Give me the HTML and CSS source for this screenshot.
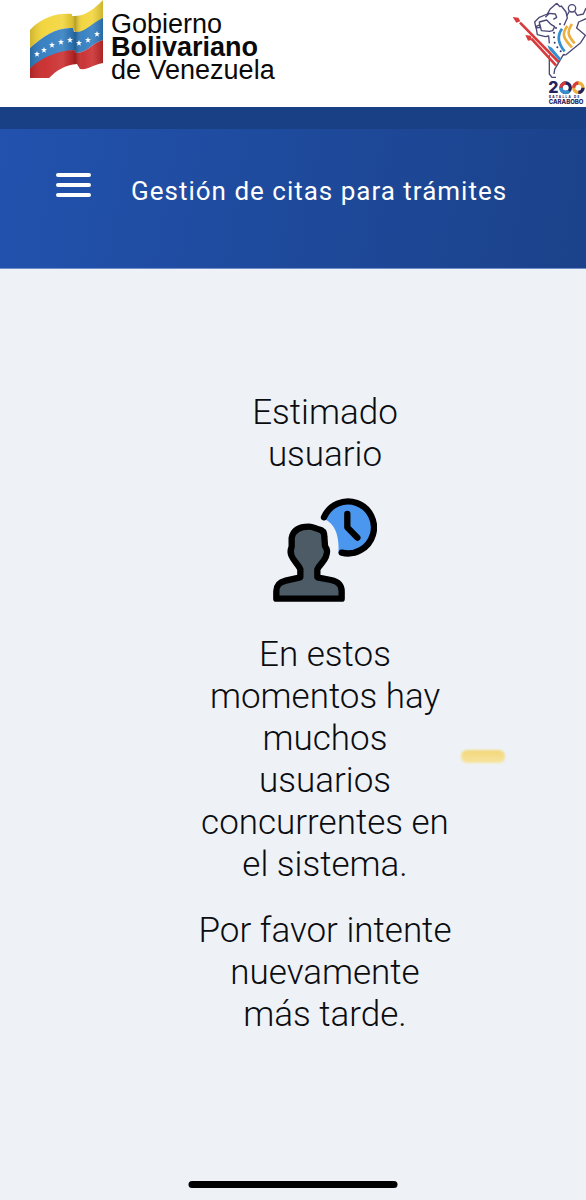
FILE: index.html
```html
<!DOCTYPE html>
<html lang="es">
<head>
  <meta charset="UTF-8">
  <meta name="viewport" content="width=device-width, initial-scale=1.0">
  <title>Gestión de citas para trámites</title>
  <link rel="stylesheet" href="styles.css">
</head>
<body>
  <header class="banner">
    <div class="gobierno">
      <svg class="flag" viewBox="0 0 74 79" aria-hidden="true">
        <defs>
          <linearGradient id="fold" x1="0" y1="0" x2="1" y2="0">
            <stop offset="0" stop-color="#000" stop-opacity="0.15"/>
            <stop offset="0.2" stop-color="#fff" stop-opacity="0.05"/>
            <stop offset="0.45" stop-color="#fff" stop-opacity="0.12"/>
            <stop offset="0.58" stop-color="#000" stop-opacity="0.1"/>
            <stop offset="0.62" stop-color="#000" stop-opacity="0.25"/>
            <stop offset="0.72" stop-color="#fff" stop-opacity="0.05"/>
            <stop offset="0.85" stop-color="#fff" stop-opacity="0.12"/>
            <stop offset="1" stop-color="#000" stop-opacity="0.15"/>
          </linearGradient>
          <path id="star" d="M0-3 .8-.9 3-.8 1.2.5 1.9 2.7 0 1.4-1.9 2.7-1.2.5-3-.8-.8-.9z"/>
        </defs>
        <path fill="#f2d437" d="M0 30C12 17 27 13 42 14v2c12 1 21-6 31-16v20C60 27 56 33 45 32l-2-4C27 27 13 36 0 48z"/>
        <path fill="#2f7cc0" d="M0 48C13 36 27 27 43 28l1 4C56 33 61 23 73 18v22C62 43 57 53 46 53l-2-3C28 52 14 58 0 68z"/>
        <path fill="#c92a2b" d="M0 68C14 56 28 51 44 50l2 3c11 0 16-10 27-13v23c-11 2-15 7-23 6l-3-5c-12 1-20 6-28 14H0z"/>
        <path fill="url(#fold)" d="M0 30C12 17 27 13 42 14v2c12 1 21-6 31-16v63c-11 2-15 7-23 6l-3-5c-12 1-20 6-28 14H0z"/>
        <g fill="#fff">
          <use href="#star" x="7" y="54"/>
          <use href="#star" x="14" y="50"/>
          <use href="#star" x="22" y="45"/>
          <use href="#star" x="31" y="42"/>
          <use href="#star" x="40" y="40"/>
          <use href="#star" x="49" y="43"/>
          <use href="#star" x="58" y="40"/>
          <use href="#star" x="67" y="34"/>
        </g>
      </svg>
      <p class="gobierno-name">Gobierno<br><strong>Bolivariano</strong><br>de Venezuela</p>
    </div>
    <svg class="carabobo" viewBox="0 0 258 318" role="img" aria-label="200 Batalla de Carabobo">
      <g fill="none" stroke="#4a4874" stroke-width="4" stroke-linejoin="round">
        <path d="M170 10 150 28l-8 14-24 10-14 14 4 18 12-2-2-16 22-6 14 14 10 6-6 12-10 2-24-2-4-18-12 6 4 24 24 6 10-2 2 22M136 52l12-12 18 2 4 10-10 6M170 10l10 10 4-2 14 18 4 18-10 22"/>
        <circle cx="216" cy="25" r="11"/>
        <path d="M208 34l-8 14M224 34l8 12 18-4 8-18M258 56l-22 10-6 18 26 22-14 22-24 20-22 18M148 166v56l8 10h12M190 164l-26 44-2 14"/>
      </g>
      <g stroke="#d83b3c" stroke-width="8">
        <path d="M60 68 176 186M94 116l74 80"/>
      </g>
      <path fill="#d83b3c" d="m38 51 17 2 6 11-12 4zM76 105l16 2 4 13-12 2z"/>
      <g fill="none" stroke-width="8">
        <path stroke="#338fd0" d="M186 86c-16 22-12 44 8 68"/>
        <path stroke="#edb03d" d="M202 78c-18 24-12 38 14 64M216 72c-18 26-10 38 8 58"/>
      </g>
      <path fill="#338fd0" d="m142 136 14 7 28 34-6 5-30-33z"/>
      <g fill="#3a3866">
        <circle cx="180" cy="72" r="3"/>
        <circle cx="168" cy="84" r="3"/>
        <circle cx="162" cy="98" r="3"/>
        <circle cx="162" cy="112" r="3"/>
        <circle cx="164" cy="128" r="3"/>
        <circle cx="172" cy="142" r="3"/>
        <circle cx="182" cy="154" r="3"/>
        <circle cx="192" cy="164" r="3"/>
      </g>
      <text class="carabobo-year" x="145" y="280">2</text>
      <g fill="none" stroke-width="10">
        <circle cx="197" cy="263" r="14" stroke="#28235c"/>
        <path stroke="#d83b3c" d="M183 263a14 14 0 0 1 14-14"/>
        <path stroke="#338fd0" d="M183 263a14 14 0 0 0 24 10"/>
        <circle cx="235" cy="263" r="14" stroke="#edb03d"/>
        <path stroke="#d83b3c" d="M221 263a14 14 0 0 1 14-14"/>
        <path stroke="#28235c" d="M235 277a14 14 0 0 0 14-14"/>
      </g>
      <text class="carabobo-small" x="147" y="295">BATALLA DE</text>
      <text class="carabobo-name" x="146" y="312">CARABOBO</text>
    </svg>
  </header>

  <nav class="toolbar">
    <button class="menu-button" type="button" aria-label="Menú">
      <span></span>
      <span></span>
      <span></span>
    </button>
    <h1>Gestión de citas para trámites</h1>
  </nav>

  <main class="message">
    <h2>Estimado usuario</h2>
    <svg class="wait-icon" viewBox="0 0 312 312" aria-hidden="true">
      <path fill="#4b96ee" d="M153 62C166 20 222-4 266 22s50 90 20 122c-22 24-50 26-90 20 4-44-8-88-43-102z"/>
      <g fill="none" stroke="#000" stroke-width="19" stroke-linecap="round" stroke-linejoin="round">
        <path d="M153 58A78 78 0 1 1 206 164M223 48v40l30 31"/>
        <path fill="#4c5b66" d="M10 302v-22c0-18 8-27 28-32l44-10v-24C74 196 62 190 56 174c-5-10-4-18 0-28v-26c4-22 22-34 52-34 12 0 20 6 30 8 12 2 16 10 16 22l2 28c8 12 8 18 2 34-4 12-18 22-25 36v24l41 8c24 5 32 16 32 34v22z"/>
      </g>
    </svg>
    <p>En estos momentos hay muchos usuarios concurrentes en el sistema.</p>
    <p>Por favor intente nuevamente más tarde.</p>
    <span class="marker"></span>
  </main>

  <div class="home-indicator"></div>
</body>
</html>
```
FILE: styles.css
```css
* {
  box-sizing: border-box;
}

body {
  margin: 0;
  min-height: 100vh;
  background-color: #eef2f7;
  color: #0b0c10;
  font-family: Roboto, sans-serif;
}

.banner {
  display: flex;
  justify-content: space-between;
  align-items: flex-start;
  height: 107px;
  padding-left: 30px;
  background: white;
}

.gobierno {
  display: flex;
  gap: 7px;
}

.flag {
  width: 74px;
  height: 79px;
}

.gobierno-name {
  margin: 13px 0 0;
  color: #0a0a0a;
  font-family: "Liberation Sans", Arial, sans-serif;
  font-size: 27px;
  line-height: 23px;
}

.carabobo {
  width: 86px;
  height: 106px;
}

.carabobo text {
  fill: #28235c;
  font-family: Inter, sans-serif;
  font-weight: 800;
}

.carabobo .carabobo-year {
  font-size: 48px;
}

.carabobo .carabobo-small {
  font-size: 9px;
  letter-spacing: 4px;
}

.carabobo .carabobo-name {
  font-size: 18px;
}

.toolbar {
  display: flex;
  align-items: center;
  gap: 40px;
  height: 162px;
  padding: 0 56px;
  border-top: 22px solid #194085;
  border-bottom: 1px solid #6f8dca;
  background: linear-gradient(100deg, #2252ae, #1b428a);
  color: white;
}

.menu-button {
  display: flex;
  flex-direction: column;
  gap: 6px;
  width: 35px;
  margin: 0 0 28px;
  padding: 0;
  border: none;
  background: none;
  cursor: pointer;
}

.menu-button span {
  width: 100%;
  height: 4px;
  border-radius: 2px;
  background: white;
}

.toolbar h1 {
  margin: 0 0 16px;
  font-size: 26px;
  font-weight: 400;
  letter-spacing: 1px;
  line-height: 32px;
  white-space: nowrap;
}

.message {
  position: relative;
  padding: 123px 134px 120px 198px;
  font-size: 35px;
  font-weight: 300;
  line-height: 42px;
  text-align: center;
}

.message h2 {
  margin: 0 30px 22px;
  font-size: 35px;
  font-weight: 300;
}

.message p {
  margin: 0 0 24px;
}

.wait-icon {
  display: block;
  width: 104px;
  height: 104px;
  margin: 0 auto 32px;
}

.marker {
  position: absolute;
  top: 481px;
  right: 81px;
  width: 44px;
  height: 13px;
  border-radius: 6px;
  background: linear-gradient(#f3d778, #f7e4a0);
  filter: blur(1px);
}

.home-indicator {
  position: fixed;
  bottom: 12px;
  left: 50%;
  width: 209px;
  height: 7px;
  border-radius: 4px;
  background: black;
  transform: translateX(-50%);
}
```
